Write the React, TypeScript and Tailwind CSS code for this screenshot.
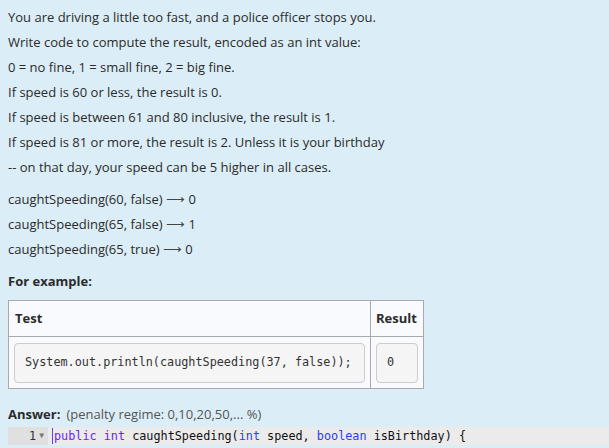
const lines = [
  'You are driving a little too fast, and a police officer stops you.',
  'Write code to compute the result, encoded as an int value:',
  '0 = no fine, 1 = small fine, 2 = big fine.',
  'If speed is 60 or less, the result is 0.',
  'If speed is between 61 and 80 inclusive, the result is 1.',
  'If speed is 81 or more, the result is 2. Unless it is your birthday',
  '-- on that day, your speed can be 5 higher in all cases.',
];

const examples = [
  ['caughtSpeeding(60, false)', '0'],
  ['caughtSpeeding(65, false)', '1'],
  ['caughtSpeeding(65, true)', '0'],
];

export default function App() {
  return (
    <div className="w-[609px] h-[448px] overflow-hidden bg-[#dbedf6] text-[#2b2b2b] font-['Open_Sans',sans-serif] text-[13px]">
      <div className="pl-2 pt-[5px]">
        {/* question text */}
        {lines.map((l, i) => (
          <p key={i} className="h-[25px] leading-[25px]">{l}</p>
        ))}

        <div className="mt-[7px]">
          {examples.map(([call, res], i) => (
            <p key={i} className="h-[25px] leading-[25px]">
              {call} <span className="text-[#444]">⟶</span> {res}
            </p>
          ))}
        </div>

        <p className="mt-[7px] h-[25px] leading-[25px] font-bold">For example:</p>

        {/* example table */}
        <table className="mt-[6px] border-collapse border border-[#aaa] bg-[#f8fafd] w-[416px]">
          <thead>
            <tr className="h-[36px]">
              <th className="border border-[#aaa] text-left px-[6px] font-bold">Test</th>
              <th className="border border-[#aaa] text-left px-[5px] font-bold w-[53px]">Result</th>
            </tr>
          </thead>
          <tbody>
            <tr className="h-[52px]">
              <td className="border border-[#aaa] px-[5px]">
                <div className="h-[40px] border border-[#ccc] rounded-[4px] bg-[#f5f5f5] flex items-center pl-[10px] font-['DejaVu_Sans_Mono',monospace] text-[11.8px] text-[#333]">
                  System.out.println(caughtSpeeding(37, false));
                </div>
              </td>
              <td className="border border-[#aaa] px-[5px]">
                <div className="h-[40px] border border-[#ccc] rounded-[4px] bg-[#f5f5f5] flex items-center pl-[10px] font-['DejaVu_Sans_Mono',monospace] text-[11.8px] text-[#333]">
                  0
                </div>
              </td>
            </tr>
          </tbody>
        </table>

        <p className="mt-[13px] h-[25px] leading-[25px]">
          <span className="font-bold">Answer:</span>
          <span className="ml-[6px] text-[#555]">(penalty regime: 0,10,20,50,... %)</span>
        </p>

        {/* code editor */}
        <div className="flex h-[18px] bg-[#ebebeb] font-['DejaVu_Sans_Mono',monospace] text-[11.8px] leading-[18px]">
          <div className="w-[40px] bg-[#e0e0e0] flex items-center justify-end pr-[4px] gap-[3px] text-[#333]">
            <span>1</span>
            <span className="text-[8px] text-[#777]">▼</span>
          </div>
          <div className="relative pl-[6px] whitespace-pre text-[#111]">
            <span className="absolute left-[4px] top-[1px] w-px h-[16px] bg-[#6a3cff]" />
            <span className="text-[#6a1fff]">public</span> <span className="text-[#6a1fff]">int</span> caughtSpeeding(<span className="text-[#2a3cff]">int</span> speed, <span className="text-[#2a3cff]">boolean</span> isBirthday) {'{'}
          </div>
        </div>
      </div>
    </div>
  );
}
